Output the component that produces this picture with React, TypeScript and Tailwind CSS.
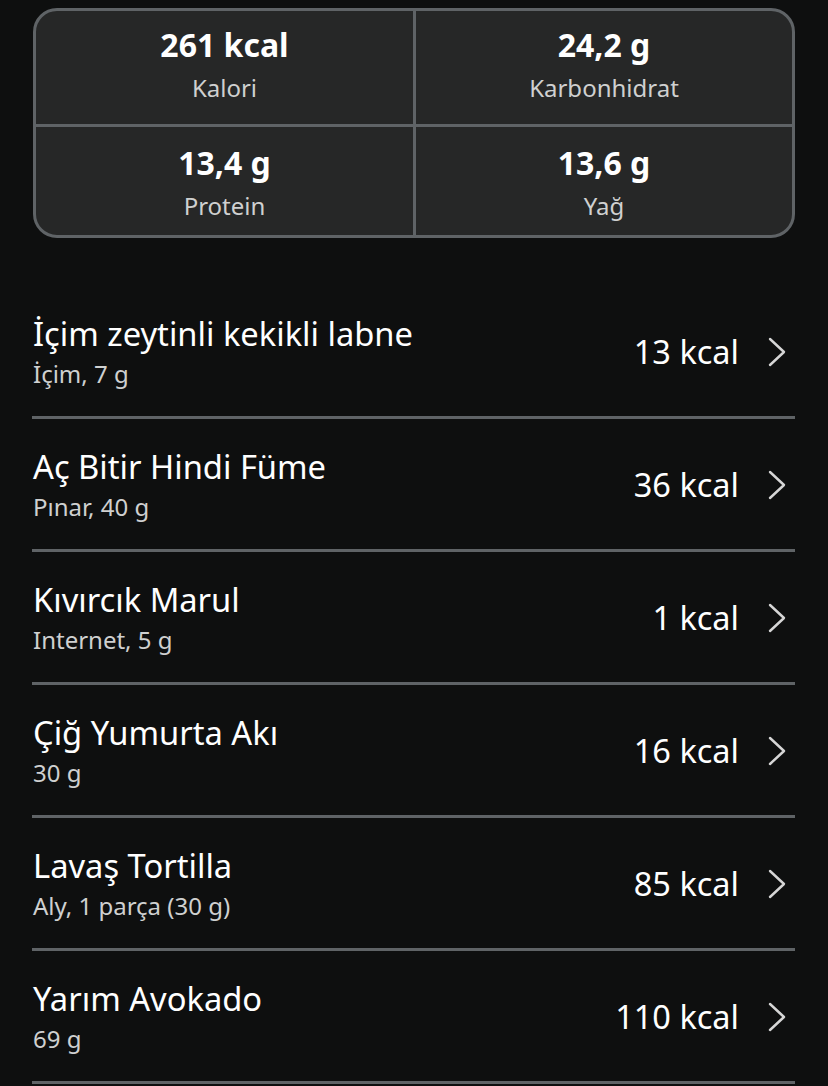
import React from 'react';

type Food = { name: string; detail: string; kcal: number };

const foods: Food[] = [
  { name: 'İçim zeytinli kekikli labne', detail: 'İçim, 7 g', kcal: 13 },
  { name: 'Aç Bitir Hindi Füme', detail: 'Pınar, 40 g', kcal: 36 },
  { name: 'Kıvırcık Marul', detail: 'Internet, 5 g', kcal: 1 },
  { name: 'Çiğ Yumurta Akı', detail: '30 g', kcal: 16 },
  { name: 'Lavaş Tortilla', detail: 'Aly, 1 parça (30 g)', kcal: 85 },
  { name: 'Yarım Avokado', detail: '69 g', kcal: 110 },
];

function Stat({ value, label, className }: { value: string; label: string; className?: string }) {
  return (
    <div className={'flex flex-col items-center justify-center ' + (className ?? '')}>
      <p className="text-[32px] font-bold leading-[40px] text-white">{value}</p>
      <p className="mt-[7px] text-[24px] leading-[32px] text-[#cfd0d0]">{label}</p>
    </div>
  );
}

function Chevron() {
  return (
    <svg width="20" height="30" viewBox="0 0 20 30" fill="none" className="ml-[28px]">
      <path d="M3 2 L17 15 L3 28" stroke="#d6d6d6" strokeWidth="2.4" strokeLinecap="round" strokeLinejoin="round" />
    </svg>
  );
}

export default function App() {
  return (
    <div
      className="min-h-[1086px] w-full bg-[#0e0f0f] pt-[8px]"
      style={{ fontFamily: '"Noto Sans", "Open Sans", sans-serif' }}
    >
      {/* özet kartı */}
      <div className="mx-[33px] grid h-[230px] grid-cols-[380px_1fr] grid-rows-[116px_1fr] overflow-hidden rounded-[24px] border-[3px] border-[#5f6366] bg-[#262727]">
        <Stat value="261 kcal" label="Kalori" className="border-r-[3px] border-b-[3px] border-[#5f6366] pb-[7px]" />
        <Stat value="24,2 g" label="Karbonhidrat" className="border-b-[3px] border-[#5f6366] pb-[7px]" />
        <Stat value="13,4 g" label="Protein" className="border-r-[3px] border-[#5f6366] pt-[3px]" />
        <Stat value="13,6 g" label="Yağ" className="pt-[3px]" />
      </div>

      <div className="mt-[48px] px-[32px] pr-[33px]">
        {foods.map((f) => (
          <div key={f.name} className="flex h-[133px] items-center border-b-[3px] border-[#5f6366] pt-[2px] pr-[8px]">
            <div className="flex-1 pl-[1px]">
              <p className="text-[32.7px] leading-[40px] text-white">{f.name}</p>
              <p className="mt-[4px] text-[24px] leading-[32px] text-[#cfd0d0]">{f.detail}</p>
            </div>
            <p className="text-[32.5px] leading-[40px] text-white">{f.kcal} kcal</p>
            <Chevron />
          </div>
        ))}
      </div>
    </div>
  );
}
